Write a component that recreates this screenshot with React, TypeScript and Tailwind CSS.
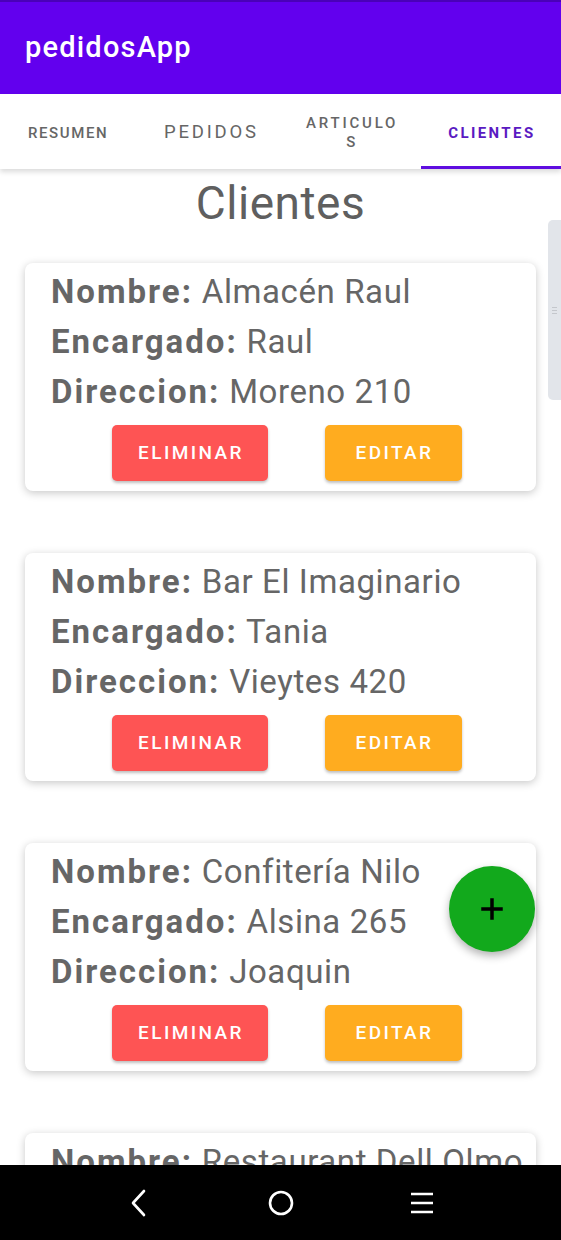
import React from "react";

const clients = [
  { nombre: "Almacén Raul", encargado: "Raul", direccion: "Moreno 210" },
  { nombre: "Bar El Imaginario", encargado: "Tania", direccion: "Vieytes 420" },
  { nombre: "Confitería Nilo", encargado: "Alsina 265", direccion: "Joaquin" },
  { nombre: "Restaurant Dell Olmo", encargado: "Carlos", direccion: "Sarmiento 12" },
];

function Card({ c }: { c: (typeof clients)[number] }) {
  return (
    <div className="mx-[25px] rounded-[8px] bg-white pt-[4px] pb-[10px] shadow-[0_2px_8px_rgba(0,0,0,0.22)]">
      <div className="pl-[26px] text-[33px] leading-[50px] tracking-[0.6px] text-[#666666]">
        <div className="whitespace-nowrap">
          <span className="font-bold tracking-[2px]">Nombre:</span> {c.nombre}
        </div>
        <div className="whitespace-nowrap">
          <span className="font-bold tracking-[2px]">Encargado:</span> {c.encargado}
        </div>
        <div className="whitespace-nowrap">
          <span className="font-bold tracking-[2px]">Direccion:</span> {c.direccion}
        </div>
      </div>
      <div className="mt-[8px] flex gap-[57px] pl-[87px]">
        <button className="flex h-[56px] w-[156px] items-center justify-center rounded-[5px] bg-[#fe5454] pl-[2px] text-[19px] font-medium tracking-[2.4px] text-white shadow-[0_2px_3px_rgba(0,0,0,0.25)]">
          ELIMINAR
        </button>
        <button className="flex h-[56px] w-[137px] items-center justify-center rounded-[5px] bg-[#ffac1f] pl-[2px] text-[19px] font-medium tracking-[2.4px] text-white shadow-[0_2px_3px_rgba(0,0,0,0.25)]">
          EDITAR
        </button>
      </div>
    </div>
  );
}

export default function App() {
  return (
    <div
      className="flex h-[1240px] w-[561px] flex-col overflow-hidden bg-white"
      style={{ fontFamily: "Roboto, 'Noto Sans', sans-serif" }}
    >
      <header className="flex h-[94px] shrink-0 items-center border-t-[2px] border-[#4a00b8] bg-[#6200ee] pl-[25px]">
        <span className="text-[29px] font-medium tracking-[1.2px] text-white">pedidosApp</span>
      </header>
      <nav className="relative z-10 grid h-[75px] shrink-0 grid-cols-4 bg-white pt-[3px] shadow-[0_3px_5px_rgba(0,0,0,0.14)]">
        <div className="flex items-center justify-center pr-[4px] text-[15px] font-medium tracking-[1.6px] text-[#666666]">
          RESUMEN
        </div>
        <div className="flex items-center justify-center pl-[2px] text-[18.5px] tracking-[2.8px] text-[#666666]">
          PEDIDOS
        </div>
        <div className="flex flex-col items-center justify-center pl-[3px] text-center text-[15px] font-medium leading-[19px] tracking-[2.8px] text-[#666666]">
          <span>ARTICULO</span>
          <span>S</span>
        </div>
        <div className="relative flex items-center justify-center pl-[2px] text-[15px] font-bold tracking-[2.4px] text-[#5a1ac2]">
          CLIENTES
          <div className="absolute bottom-0 left-0 right-0 h-[3px] bg-[#5f0ee0]" />
        </div>
      </nav>
      <main className="relative flex-1 overflow-hidden">
        <h1 className="mt-[6px] text-center text-[46px] leading-[56px] tracking-[0.5px] text-[#5f5f5f]">Clientes</h1>
        <div className="mt-[32px] flex flex-col gap-[62px]">
          {clients.map((c, i) => (
            <Card key={i} c={c} />
          ))}
        </div>
        <div className="absolute right-0 top-[51px] flex h-[180px] w-[13px] items-center justify-center rounded-l-[5px] bg-[#e2e5ea]">
          <div className="flex flex-col gap-[2px]">
            <div className="h-px w-[5px] bg-[#c4c7cc]" />
            <div className="h-px w-[5px] bg-[#c4c7cc]" />
            <div className="h-px w-[5px] bg-[#c4c7cc]" />
          </div>
        </div>
        <button className="absolute left-[449px] top-[697px] flex h-[86px] w-[86px] items-center justify-center rounded-full bg-[#12a91c] shadow-[0_4px_8px_rgba(0,0,0,0.3)]">
          <svg width="22" height="22" viewBox="0 0 22 22">
            <path d="M11 2v18M2 11h18" stroke="#000" strokeWidth="3.5" strokeLinecap="square" />
          </svg>
        </button>
      </main>
      <footer className="flex h-[75px] shrink-0 items-center justify-center gap-[116px] bg-black">
        <svg width="24" height="28" viewBox="0 0 24 28">
          <path d="M16 2L5 14l11 12" stroke="#fff" strokeWidth="2.6" fill="none" strokeLinecap="round" strokeLinejoin="round" />
        </svg>
        <svg width="26" height="26" viewBox="0 0 26 26">
          <circle cx="13" cy="13" r="11" stroke="#fff" strokeWidth="2.6" fill="none" />
        </svg>
        <svg width="24" height="24" viewBox="0 0 24 24">
          <path d="M1 3h22M1 12h22M1 21h22" stroke="#fff" strokeWidth="2.6" />
        </svg>
      </footer>
    </div>
  );
}
